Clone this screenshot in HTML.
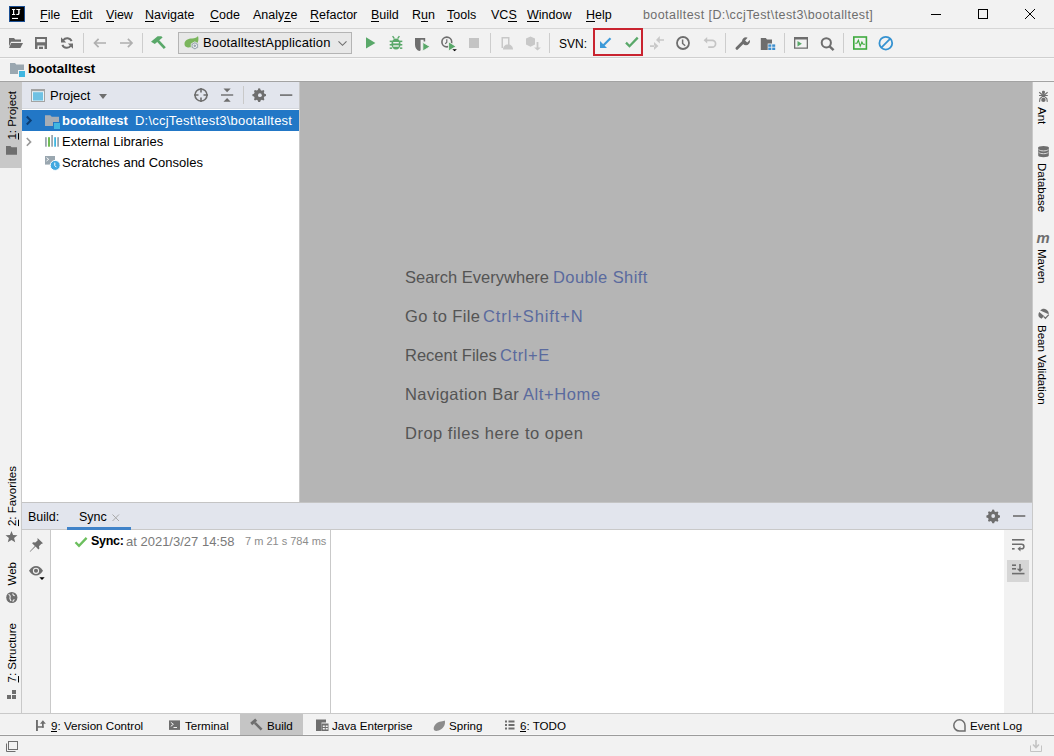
<!DOCTYPE html>
<html><head><meta charset="utf-8">
<style>
*{margin:0;padding:0;box-sizing:border-box}
html,body{width:1054px;height:756px;overflow:hidden;background:#f2f2f2;font-family:"Liberation Sans",sans-serif;color:#000}
.a{position:absolute}
.t{position:absolute;white-space:nowrap;line-height:1}
svg{position:absolute;overflow:visible}
.u{background:linear-gradient(#000,#000) no-repeat 0 12.6px/100% 1px}
.u2{background:linear-gradient(#000,#000) no-repeat 0 11.6px/100% 1px}
</style></head><body>

<!-- ===== TITLE BAR ===== -->
<div class="a" style="left:0;top:0;width:1054px;height:28px;background:#f2f2f2"></div>
<div class="a" style="left:0;top:28px;width:1054px;height:1px;background:#d6d6d6"></div>
<!-- logo -->
<svg style="left:0;top:0" width="40" height="28">
<rect x="9" y="6" width="16" height="16" fill="#1b4f94"/>
<rect x="10" y="7" width="14" height="14" fill="#000"/>
<path d="M12 9h3.2v1.1h-1v3.8h1V15H12v-1.1h1v-3.8h-1z" fill="#fff"/>
<path d="M16.3 9h4v1.1h-.7v3.1c0 1.3-.8 1.9-2 1.9-.6 0-1.1-.1-1.4-.3l.2-1.1c.3.2.7.3 1 .3.5 0 .8-.3.8-.9v-3h-1.9z" fill="#fff"/>
<rect x="12" y="17.9" width="6" height="1.1" fill="#fff"/>
</svg>
<div id="menu" style="font-size:12.5px;color:#000">
<div class="t" style="left:40px;top:9px"><span class="u">F</span>ile</div>
<div class="t" style="left:71px;top:9px"><span class="u">E</span>dit</div>
<div class="t" style="left:106px;top:9px"><span class="u">V</span>iew</div>
<div class="t" style="left:145px;top:9px"><span class="u">N</span>avigate</div>
<div class="t" style="left:210px;top:9px"><span class="u">C</span>ode</div>
<div class="t" style="left:253px;top:9px">Analy<span class="u">z</span>e</div>
<div class="t" style="left:310px;top:9px"><span class="u">R</span>efactor</div>
<div class="t" style="left:371px;top:9px"><span class="u">B</span>uild</div>
<div class="t" style="left:412px;top:9px">R<span class="u">u</span>n</div>
<div class="t" style="left:447px;top:9px"><span class="u">T</span>ools</div>
<div class="t" style="left:491px;top:9px">VC<span class="u">S</span></div>
<div class="t" style="left:527px;top:9px"><span class="u">W</span>indow</div>
<div class="t" style="left:586px;top:9px"><span class="u">H</span>elp</div>
</div>
<div class="t" style="left:643px;top:9px;font-size:12.5px;color:#6e6e6e;letter-spacing:0.42px">bootalltest [D:\ccjTest\test3\bootalltest]</div>
<!-- window controls -->
<div class="a" style="left:931px;top:14px;width:10px;height:1px;background:#000"></div>
<div class="a" style="left:978px;top:9px;width:10px;height:10px;border:1px solid #000"></div>
<svg style="left:1025px;top:9px" width="10" height="10"><path d="M0 0L10 10M10 0L0 10" stroke="#000" stroke-width="1"/></svg>

<!-- ===== TOOLBAR ===== -->
<div class="a" style="left:0;top:57px;width:1054px;height:1px;background:#cfcfcf"></div><div class="a" style="left:0;top:58px;width:1054px;height:1px;background:#f8f8f8"></div>
<svg style="left:0;top:0" width="1054" height="756">
<g fill="#6e6e6e">
<path d="M9 38h5l1.2 1.5H21v2.3H11L9 46.5z"/>
<path d="M11.2 43H23l-2.6 5H9z"/>
<path fill-rule="evenodd" d="M35 37h12v12H35z M36.8 39h8.4v3.3h-8.4z M37.5 45.5h7v3.5h-7z"/>
<rect x="39" y="46.7" width="4" height="2.3"/>
</g>
<g fill="none" stroke="#6e6e6e" stroke-width="2">
<path d="M71.6 41.2A4.8 4.8 0 0 0 63.2 40.2"/>
<path d="M62.4 44.8A4.8 4.8 0 0 0 70.8 45.8"/>
</g>
<path d="M61 37.3v5.2h5.2z M73 48.7v-5.2h-5.2z" fill="#6e6e6e"/>
<g fill="#cdcdcd">
<rect x="83" y="33" width="1" height="20"/><rect x="142" y="33" width="1" height="20"/>
<rect x="490" y="33" width="1" height="20"/><rect x="549" y="33" width="1" height="20"/>
<rect x="725" y="33" width="1" height="20"/><rect x="784" y="33" width="1" height="20"/>
<rect x="843" y="33" width="1" height="20"/>
</g>
<g fill="none" stroke="#afafaf" stroke-width="1.7">
<path d="M106 43H94.5 M98.6 38.9L94.5 43l4.1 4.1"/>
<path d="M120 43h11.5 M127.9 38.9l4.1 4.1-4.1 4.1"/>
</g>
<path d="M151 41.8l6.6-5.6h3.8l1.2 1.3-7.8 6.6z" fill="#59a869"/>
<path d="M157.8 40.6l7 7.6" stroke="#59a869" stroke-width="2.7"/>
<!-- combo -->
<rect x="178.5" y="32.5" width="173" height="21" fill="#e8e8e8" stroke="#b4b4b4"/>
<path d="M184.5 44c0-4 4-5.5 7.5-5.5 3 0 5-1.2 6-2.5 .5 2 .8 4-.3 6.5-1.2 3-4 4.5-7 4.8-2.5.3-6 .5-6.2-3.3z" fill="#7ab55c"/>
<path d="M194.8 41.8l3.6 2v4l-3.6 2-3.6-2v-4z" fill="#9aa7b0" stroke="#e8e8e8" stroke-width=".8"/>
<circle cx="194.8" cy="45.8" r="1.8" fill="none" stroke="#fff" stroke-width=".9"/>
<path d="M338.5 41.3l4 4 4-4" fill="none" stroke="#6e6e6e" stroke-width="1.1"/>
<!-- run/debug -->
<path d="M366 37.3V48.6L375.4 43z" fill="#59a869"/>
<g fill="#59a869">
<ellipse cx="396" cy="44" rx="4.6" ry="5.6"/>
<rect x="389.7" y="40.6" width="2.4" height="1.5"/><rect x="389.7" y="44" width="2.4" height="1.5"/><rect x="389.7" y="47.4" width="2.4" height="1.5"/>
<rect x="399.9" y="40.6" width="2.4" height="1.5"/><rect x="399.9" y="44" width="2.4" height="1.5"/><rect x="399.9" y="47.4" width="2.4" height="1.5"/>
</g>
<path d="M392.6 36.2l1.8 2.4 M399.4 36.2l-1.8 2.4" stroke="#59a869" stroke-width="1.4"/>
<rect x="393.2" y="42" width="5.6" height="1.4" fill="#f2f2f2"/><rect x="393.2" y="45.3" width="5.6" height="1.4" fill="#f2f2f2"/>
<path d="M415 38h10.2v3.5h-1.6v-1.7h-3v10.5c-.4.3-.8.5-1.3.7-2.5-.9-4.3-3-4.3-6.3z" fill="#6e6e6e"/>
<path d="M421.2 40.2v8.6c.6-.4 1.1-.9 1.5-1.4v-4.6" fill="#f2f2f2"/>
<path d="M422.8 42.3v8.7l7.2-4.35z" fill="#59a869" stroke="#f2f2f2" stroke-width=".9"/>
<circle cx="446.8" cy="42" r="4.9" fill="none" stroke="#6e6e6e" stroke-width="1.6"/>
<path d="M446.8 39.2v3l-1.6 1.6" fill="none" stroke="#6e6e6e" stroke-width="1.2"/>
<path d="M448.6 41.8v9.2l7.4-4.6z" fill="#59a869" stroke="#f2f2f2" stroke-width=".9"/>
<path d="M452.3 49.2h4.6l-2.3 2z" fill="#000"/>
<rect x="469" y="38" width="10" height="10" fill="#c4c4c4"/>
<!-- disabled device -->
<g fill="#c8c8c8">
<path fill-rule="evenodd" d="M501.5 37h8v8h-1.5v-6.5h-5V48h-1.5z"/>
<path d="M503 49.4c0-3 2-5 5-5s5 2 5 5z"/>
<path d="M526 38.5l4.5-2 4.5 2v6l-4.5 2.3-4.5-2.3z"/>
<path d="M536.6 42h1.8v5.5h2.5l-3.4 3-3.4-3h2.5z"/>
</g>
<!-- svn -->
<rect x="594" y="29" width="48" height="26" fill="none" stroke="#c9232f" stroke-width="2"/>
<path d="M610.5 38.2L602 46.7" stroke="#3d9ad9" stroke-width="2.2"/>
<path d="M600 41v7h7z" fill="#3d9ad9"/>
<path d="M626 42.6l3.5 3.6 8.2-8.6" fill="none" stroke="#59a869" stroke-width="2.3"/>
<g fill="#c8c8c8">
<path d="M656 40l3.8-4.1v7.7z M659.5 39.2h4.5v1.6h-4.5z M658.4 46l-4.4-4v8z M650 45.2h4.5v1.7H650z"/>
</g>
<circle cx="683" cy="43" r="6" fill="none" stroke="#6e6e6e" stroke-width="1.8"/>
<path d="M682.6 39.4v4.1l2.6 2.3" fill="none" stroke="#6e6e6e" stroke-width="1.5"/>
<path d="M707 40.3h5.2a3.4 3.4 0 0 1 0 6.8h-4" fill="none" stroke="#c4c4c4" stroke-width="1.7"/>
<path d="M703.6 40.3l3.6-3.3v6.6z" fill="#c4c4c4"/>
<!-- wrench etc -->
<path d="M737 48.3l6-6" stroke="#6e6e6e" stroke-width="3" stroke-linecap="round"/>
<path d="M746 37.2c-2.2 0-4 1.8-4 4s1.8 4 4 4 4-1.8 4-4c0-.5-.1-.9-.2-1.3l-2.6 2.5-2.1-2 2.5-2.6c-.5-.4-1-.6-1.6-.6z" fill="#6e6e6e"/>
<path d="M760.8 38h5l1.2 1.4h5v4h-4.3v6.5h-6.9z" fill="#6e6e6e"/>
<g fill="#3d8fcf"><rect x="768.3" y="44.4" width="3" height="2.4"/><rect x="772.2" y="44.4" width="3" height="2.4"/><rect x="768.3" y="47.6" width="3" height="2.4"/><rect x="772.2" y="47.6" width="3" height="2.4"/></g>
<path fill-rule="evenodd" d="M794 37h14v11.8H794z M795.3 39.6h11.4v7.9h-11.4z" fill="#6e6e6e"/>
<path d="M797.5 41v5.4l4.4-2.7z" fill="#59a869"/>
<circle cx="826.3" cy="42.8" r="4.6" fill="none" stroke="#6e6e6e" stroke-width="2"/>
<path d="M829.6 46.3l4 3.8" stroke="#6e6e6e" stroke-width="2.4"/>
<rect x="853.8" y="37" width="12.6" height="12" fill="none" stroke="#3faa3f" stroke-width="1.6"/>
<path d="M855.2 43.3h1.7l1.5-3 1.8 5.8 1.7-4 1.2 2.2h2" fill="none" stroke="#3faa3f" stroke-width="1.1"/>
<circle cx="885.8" cy="43.2" r="6.4" fill="none" stroke="#3592d1" stroke-width="1.8"/>
<path d="M890.3 38.7l-9 9" stroke="#3592d1" stroke-width="1.8"/>
<!-- navbar folder -->
<path d="M10 63h5l1.3 1.6H24V74H10z" fill="#9aa7b0"/>
<rect x="18" y="70" width="7.6" height="7.4" fill="#f2f2f2"/>
<rect x="19" y="71" width="6" height="6" fill="#40b6e0"/>
</svg>
<div class="t" style="left:203px;top:36px;font-size:13px;color:#000;letter-spacing:0.15px">BootalltestApplication</div>
<div class="t" style="left:559px;top:38px;font-size:12px;color:#000">SVN:</div>
<div class="t" style="left:28px;top:62px;font-size:13.3px;font-weight:bold;color:#000">bootalltest</div>


<!-- ===== NAV BAR ===== -->
<div id="navbar"></div>

<!-- ===== MAIN ===== -->
<div class="a" style="left:0;top:80px;width:1054px;height:1px;background:#f6f6f6"></div><div class="a" style="left:0;top:81px;width:1054px;height:1px;background:#a3a3a3"></div>
<!-- left stripe -->
<div class="a" style="left:21px;top:82px;width:1px;height:632px;background:#c9c9c9"></div>
<div class="a" style="left:0;top:82px;width:21px;height:86px;background:#c8c8c8"></div>
<!-- right stripe -->
<div class="a" style="left:1032px;top:82px;width:1px;height:632px;background:#c9c9c9"></div>

<!-- project panel -->
<div class="a" style="left:22px;top:82px;width:278px;height:26px;background:#e2e5ed"></div>
<div class="a" style="left:22px;top:108px;width:278px;height:1px;background:#d6d9df"></div>
<div class="a" style="left:22px;top:109px;width:278px;height:393px;background:#fff"></div>
<div class="a" style="left:22px;top:110px;width:277px;height:21px;background:#2277c6"></div>
<div class="a" style="left:299px;top:82px;width:1px;height:420px;background:#c9c9c9"></div>
<svg style="left:0;top:0" width="1054" height="756">
<!-- header icons -->
<rect x="31.5" y="89.5" width="13" height="12" fill="#e8f4fa" stroke="#a3a3a3"/>
<rect x="31" y="89" width="14" height="2.2" fill="#a3a3a3"/>
<rect x="33" y="92.2" width="10" height="8.3" fill="#6fc1e3"/>
<path d="M99 94h8l-4 5z" fill="#6e6e6e"/>
<circle cx="201" cy="95" r="6" fill="none" stroke="#6e6e6e" stroke-width="1.6"/>
<path d="M201 88v4.5M201 97.5v4.5M194 95h4.5M203.5 95h4.5" stroke="#6e6e6e" stroke-width="1.6"/>
<path d="M221 95h12.2" stroke="#6e6e6e" stroke-width="1.4"/>
<path d="M223.5 88.5h7.2l-3.6 3.8z M223.5 101.8h7.2l-3.6-3.8z" fill="#6e6e6e"/>
<rect x="243" y="86" width="1" height="18" fill="#c9c9c9"/>
<path d="M258.8 88.3l1.3.2.5 1.6 1.2.6 1.6-.6 1 .9-.6 1.6.6 1.2 1.6.5v1.8l-1.6.5-.6 1.2.6 1.6-1 1-1.6-.6-1.2.6-.5 1.6h-1.8l-.5-1.6-1.2-.6-1.6.6-1-1 .6-1.6-.6-1.2-1.6-.5V94.3l1.6-.5.6-1.2-.6-1.6 1-1 1.6.6 1.2-.6.5-1.6z" fill="#6e6e6e"/>
<circle cx="259.9" cy="95.2" r="1.9" fill="#e2e5ed"/>
<rect x="280" y="94.3" width="12.3" height="1.6" fill="#6e6e6e"/>
<!-- tree -->
<path d="M26.8 116.5l3.9 4-3.9 4" fill="none" stroke="#0b3d73" stroke-width="2"/>
<path d="M45 115.2h5.3l1.4 1.6H59V126H45z" fill="#a6adb5"/>
<rect x="53" y="122" width="7.4" height="7.6" fill="#2277c6"/>
<rect x="54" y="123" width="6" height="6" fill="#40b6e0"/>
<path d="M26.8 138l3.8 3.9-3.8 3.9" fill="none" stroke="#9a9a9a" stroke-width="1.6"/>
<rect x="45" y="137.2" width="1.8" height="9.5" fill="#9aa7b0"/>
<rect x="48.1" y="137.2" width="1.8" height="9.5" fill="#62b543"/>
<rect x="51.2" y="135" width="1.8" height="11.7" fill="#9aa7b0"/>
<rect x="54.2" y="137.2" width="1.8" height="9.5" fill="#40b6e0"/>
<rect x="57.2" y="137.2" width="1.8" height="9.5" fill="#9aa7b0"/>
<rect x="45" y="156" width="10" height="8.6" fill="#9aa7b0"/>
<path d="M46.5 157.6l2.2 1.7-2.2 1.7" fill="none" stroke="#fff" stroke-width=".9"/>
<circle cx="55.2" cy="165.4" r="5" fill="#40a8e0" stroke="#fff" stroke-width="1"/>
<path d="M54.8 162.6v3l1.6 1.6" fill="none" stroke="#fff" stroke-width="1"/>
</svg>
<div class="t" style="left:50px;top:89px;font-size:13px;color:#000">Project</div>
<div class="t" style="left:62px;top:114px;font-size:13px;font-weight:bold;color:#fff">bootalltest</div>
<div class="t" style="left:135px;top:114px;font-size:13px;color:#fff;letter-spacing:0.22px">D:\ccjTest\test3\bootalltest</div>
<div class="t" style="left:62px;top:135px;font-size:13px;color:#000">External Libraries</div>
<div class="t" style="left:62px;top:156px;font-size:13px;color:#000">Scratches and Consoles</div>
<!-- editor -->
<div class="a" style="left:300px;top:82px;width:732px;height:420px;background:#b5b5b5"></div>
<div style="font-size:16.5px;color:#545454">
<div class="t" style="left:405px;top:268.5px">Search Everywhere</div><div class="t" style="left:553px;top:268.5px;color:#5a6a9e;letter-spacing:0.4px">Double Shift</div>
<div class="t" style="left:405px;top:307.5px;letter-spacing:0.38px">Go to File</div><div class="t" style="left:483px;top:307.5px;color:#5a6a9e;letter-spacing:0.9px">Ctrl+Shift+N</div>
<div class="t" style="left:405px;top:346.5px">Recent Files</div><div class="t" style="left:500px;top:346.5px;color:#5a6a9e;letter-spacing:0.6px">Ctrl+E</div>
<div class="t" style="left:405px;top:385.5px;letter-spacing:0.43px">Navigation Bar</div><div class="t" style="left:523px;top:385.5px;color:#5a6a9e;letter-spacing:0.6px">Alt+Home</div>
<div class="t" style="left:405px;top:424.5px;letter-spacing:0.5px">Drop files here to open</div>
</div>

<!-- stripes text -->
<div style="font-size:11.5px;color:#000">
<div class="t" style="left:5px;top:91px;writing-mode:vertical-rl;transform:rotate(180deg);line-height:14px"><span style="text-decoration:underline">1</span>: Project</div>
<div class="t" style="left:5px;top:466px;writing-mode:vertical-rl;transform:rotate(180deg);line-height:14px"><span style="text-decoration:underline">2</span>: Favorites</div>
<div class="t" style="left:5px;top:562px;writing-mode:vertical-rl;transform:rotate(180deg);line-height:14px">Web</div>
<div class="t" style="left:5px;top:623px;writing-mode:vertical-rl;transform:rotate(180deg);line-height:14px"><span style="text-decoration:underline">7</span>: Structure</div>
<div class="t" style="left:1035px;top:107px;writing-mode:vertical-rl;line-height:14px">Ant</div>
<div class="t" style="left:1035px;top:163px;writing-mode:vertical-rl;line-height:14px">Database</div>
<div class="t" style="left:1035px;top:249px;writing-mode:vertical-rl;line-height:14px">Maven</div>
<div class="t" style="left:1035px;top:325px;writing-mode:vertical-rl;line-height:14px">Bean Validation</div>
</div>

<!-- build panel -->
<div class="a" style="left:22px;top:502px;width:1010px;height:1px;background:#c4c4c4"></div>
<div class="a" style="left:22px;top:503px;width:1010px;height:26px;background:#e2e5ed"></div>
<div class="a" style="left:22px;top:529px;width:1010px;height:1px;background:#c9c9c9"></div>
<div class="a" style="left:67px;top:527px;width:64px;height:3px;background:#4083c9"></div>
<div class="a" style="left:22px;top:530px;width:28px;height:183px;background:#f2f2f2"></div>
<div class="a" style="left:50px;top:530px;width:1px;height:183px;background:#c9c9c9"></div>
<div class="a" style="left:51px;top:530px;width:953px;height:183px;background:#fff"></div>
<div class="a" style="left:330px;top:530px;width:1px;height:183px;background:#c9c9c9"></div>
<div class="a" style="left:1004px;top:530px;width:28px;height:183px;background:#f2f2f2"></div>
<div class="a" style="left:1007px;top:560px;width:22px;height:22px;background:#d6d6d6"></div>
<div class="t" style="left:28px;top:510.5px;font-size:12.5px;color:#000">Build:</div>
<div class="t" style="left:79px;top:510.5px;font-size:12.5px;color:#000">Sync</div>
<div class="t" style="left:91px;top:535px;font-size:12.5px;font-weight:bold;color:#000;letter-spacing:-0.3px">Sync:</div>
<div class="t" style="left:126px;top:535px;font-size:13px;color:#7a7a7a">at 2021/3/27 14:58</div>
<div class="t" style="left:245px;top:536px;font-size:11px;color:#8c8c8c">7 m 21 s 784 ms</div>

<!-- bottom stripe -->
<div class="a" style="left:0;top:713px;width:1054px;height:1px;background:#c9c9c9"></div>
<div class="a" style="left:240px;top:714px;width:63px;height:21px;background:#c5c5c5"></div>
<div class="a" style="left:0;top:734px;width:1054px;height:1px;background:#f7f7f7"></div><div class="a" style="left:240px;top:734px;width:63px;height:1px;background:#c5c5c5"></div><div class="a" style="left:0;top:735px;width:1054px;height:1px;background:#9c9c9c"></div>
<div style="font-size:11.6px;color:#000">
<div class="t" style="left:51px;top:720px"><span class="u2">9</span>: Version Control</div>
<div class="t" style="left:185px;top:720px">Terminal</div>
<div class="t" style="left:267px;top:720px">Build</div>
<div class="t" style="left:332px;top:720px">Java Enterprise</div>
<div class="t" style="left:449px;top:720px">Spring</div>
<div class="t" style="left:520px;top:720px"><span class="u2">6</span>: TODO</div>
<div class="t" style="left:970px;top:720px">Event Log</div>
</div>

<svg style="left:0;top:0" width="1054" height="756">
<!-- left stripe icons -->
<path d="M6 146h4.5l1 1.3H17v7.4H6z" fill="#6e6e6e"/>
<path d="M11.50 530.90 L13.09 535.02 L17.49 535.25 L14.07 538.03 L15.20 542.30 L11.50 539.90 L7.80 542.30 L8.93 538.03 L5.51 535.25 L9.91 535.02z" fill="#6e6e6e"/>
<circle cx="11.8" cy="597.5" r="5.6" fill="#6e6e6e"/>
<path d="M8.5 594.5c1.5.5 2 1.5 1.5 3-.5 1.2.5 2 1 3.5M13 593.5c-.5 1 .5 2 1.8 2.2M14.5 599.5c-1 .3-1.6 1-1.6 2.3" fill="none" stroke="#f2f2f2" stroke-width="1.1"/>
<g fill="#6e6e6e"><rect x="12" y="690" width="4" height="4"/><rect x="7" y="695" width="4" height="4"/><rect x="12" y="695" width="4" height="4"/></g>
<!-- right stripe icons -->
<g fill="#6e6e6e">
<rect x="1042" y="90.8" width="2.9" height="3.1" rx="1"/>
<ellipse cx="1043.4" cy="95.7" rx="1.5" ry="1.6"/>
<ellipse cx="1043.4" cy="99.9" rx="2.2" ry="2.1"/>
<path d="M1039.2 92.3L1043.4 95.7L1047.6 92.3M1039 95.5H1047.8M1039.5 101.8L1040 98.5L1043.4 95.7L1046.8 98.5L1047.3 101.8" fill="none" stroke="#6e6e6e" stroke-width="1.1"/>
<path d="M1038.2 147.6v8c0 1 2.4 1.7 5.3 1.7s5.3-.7 5.3-1.7v-8z"/>
<ellipse cx="1043.5" cy="147.6" rx="5.3" ry="1.6"/>
<path d="M1038.7 149.6c.9.8 2.6 1.3 4.8 1.3s3.9-.5 4.8-1.3M1038.7 152.4c.9.8 2.6 1.3 4.8 1.3s3.9-.5 4.8-1.3" fill="none" stroke="#dadada" stroke-width="1"/>
</g>
<text x="1036.6" y="242.6" font-family="Liberation Sans" font-style="italic" font-weight="bold" font-size="14" fill="#6e6e6e" textLength="13.2" lengthAdjust="spacingAndGlyphs">m</text>
<path d="M1040.2 310.6c1.5-1.8 4-2.3 6-1.2 1.8 1 2.8 3 2.5 4.8z" fill="#6e6e6e"/>
<path d="M1039.3 312c-1.4 2-1.2 4.5.6 5.8l1.6.9 2.6-2.6z" fill="#6e6e6e"/>
<path d="M1043.8 316.6l1.6 1.6 3.4-3.6" fill="none" stroke="#6e6e6e" stroke-width="1.3"/>
<!-- build header icons -->
<path d="M112.5 514.5l6.5 6.5M119 514.5l-6.5 6.5" stroke="#a8a8a8" stroke-width="1"/>
<path d="M992.8 509.6l1.3.2.5 1.6 1.2.6 1.6-.6 1 .9-.6 1.6.6 1.2 1.6.5v1.8l-1.6.5-.6 1.2.6 1.6-1 1-1.6-.6-1.2.6-.5 1.6h-1.8l-.5-1.6-1.2-.6-1.6.6-1-1 .6-1.6-.6-1.2-1.6-.5V515.6l1.6-.5.6-1.2-.6-1.6 1-1 1.6.6 1.2-.6.5-1.6z" fill="#6e6e6e"/>
<circle cx="993.2" cy="516" r="1.9" fill="#e2e5ed"/>
<rect x="1013" y="515.2" width="12.3" height="1.6" fill="#6e6e6e"/>
<!-- build left toolbar -->
<path d="M37.5 538l5.5 5.3-1.8.6-2.2 2.3.4 2.2-1 1-2.8-2.8-5.4 5.2-.5-.4 5.2-5.4-2.8-2.8 1-1 2.2.4 2.3-2.2z" fill="#6e6e6e"/>
<path d="M29 570.8c1.8-3 4.3-4.7 7-4.7s5.2 1.7 7 4.7c-1.8 3-4.3 4.8-7 4.8s-5.2-1.8-7-4.8z" fill="#6e6e6e"/>
<circle cx="36" cy="570.8" r="2.6" fill="none" stroke="#f2f2f2" stroke-width="1.1"/>
<path d="M39.3 577.3h5.4l-2.7 2.8z" fill="#000"/>
<path d="M75.5 542.3l3.5 3.6 7.6-8" fill="none" stroke="#6cbf5e" stroke-width="2.3"/>
<!-- build right toolbar -->
<g fill="#6e6e6e">
<rect x="1012" y="539" width="12.5" height="1.6"/>
<path d="M1012 543.4h9.6a3.1 3.1 0 0 1 0 6.2h-1.5v-1.6h1.5a1.5 1.5 0 0 0 0-3h-9.6z"/>
<path d="M1017.5 548.8l3-2.6v5.2z"/>
<rect x="1012" y="548" width="2.6" height="1.6"/>
<rect x="1012" y="564.4" width="4" height="1.6"/><rect x="1012" y="568" width="4" height="1.6"/>
<rect x="1012" y="572.8" width="12.5" height="1.6"/>
<rect x="1019.2" y="564" width="1.6" height="6"/>
<path d="M1016.8 568.8h6.4l-3.2 3.2z"/>
</g>
<!-- bottom stripe icons -->
<g fill="#6e6e6e">
<rect x="36" y="720" width="1.9" height="11"/>
<rect x="36" y="726.2" width="7.7" height="1.5"/>
<rect x="42" y="722" width="1.7" height="5.7"/>
<path d="M40 723.7l2.9-3.4 3 3.4z"/>
<rect x="169" y="720.4" width="11" height="9.5"/>
<path d="M295 0" />
</g>
<path d="M170.8 722.3l2.6 2-2.6 2" fill="none" stroke="#f2f2f2" stroke-width="1"/>
<rect x="173.5" y="727" width="3.5" height="1" fill="#f2f2f2"/>
<path d="M251.2 724l5-4.3" stroke="#6e6e6e" stroke-width="3"/><path d="M254.8 722.8l6.8 6.9" stroke="#6e6e6e" stroke-width="2.6"/>
<path d="M316 719.5h10v3h-4.5v8.5H316z" fill="#6e6e6e"/>
<rect x="321.5" y="723.5" width="7" height="7.5" fill="#6e6e6e"/>
<path d="M322.8 725.5h2v1.5h-2zM325.7 725.5h2v1.5h-2zM322.8 728h2v1.5h-2zM325.7 728h2v1.5h-2z" fill="#f2f2f2"/>
<path d="M444.8 720.5c-1 1-6 .5-9 3.5-2.5 2.5-2.5 5.5-1.2 6.5 1 .8 4 .5 6.5-1.2 3-2 4.5-5.5 3.7-8.8z" fill="#8c8c8c"/>
<g fill="#6e6e6e">
<rect x="505" y="720.5" width="2" height="2"/><rect x="508.5" y="720.5" width="6" height="2"/>
<rect x="505" y="724" width="2" height="2"/><rect x="508.5" y="724" width="6" height="2"/>
<rect x="505" y="727.5" width="2" height="2"/><rect x="508.5" y="727.5" width="6" height="2"/>
</g>
<path d="M959.4 719.8A5.6 5.6 0 0 1 965 725.4V731H959.4A5.6 5.6 0 0 1 953.8 725.4A5.6 5.6 0 0 1 959.4 719.8z" fill="none" stroke="#6e6e6e" stroke-width="1.5"/>
<!-- status bar -->
<path d="M6.5 743.5v8h9" fill="none" stroke="#6e6e6e" stroke-width="1"/>
<rect x="8.5" y="741.5" width="9" height="8" fill="none" stroke="#6e6e6e" stroke-width="1"/>
<path d="M1030.5 745.5v6h11v-6" fill="none" stroke="#c4c4c4" stroke-width="1"/>
<path d="M1036 740v7M1033 744.5l3 3 3-3" fill="none" stroke="#c4c4c4" stroke-width="1.6"/>
</svg>
</body></html>
